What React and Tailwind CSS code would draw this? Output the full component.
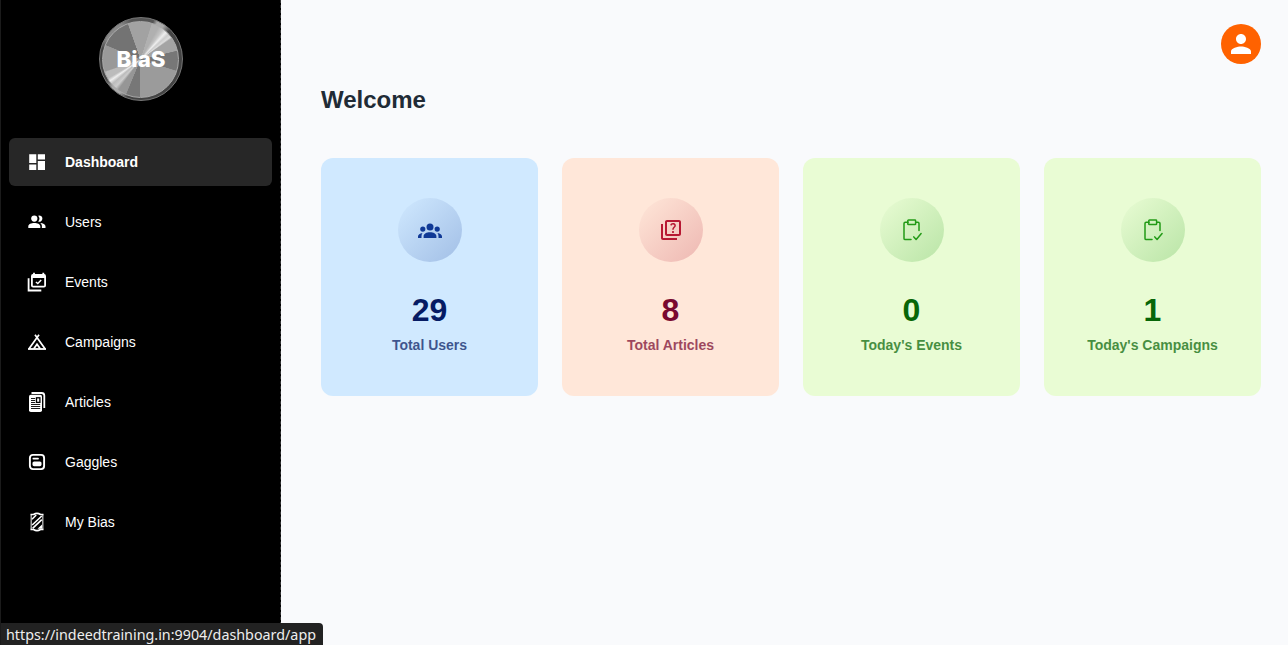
import { MdOutlineQuiz, MdPerson } from 'react-icons/md';

const DashboardIcon = () => (
  <svg width="22" height="22" viewBox="0 0 22 22" fill="currentColor">
    <path d="M3.2 3.2h7.1v8.8H3.2zM11.8 3.2H19v5.4h-7.2zM3.2 13.5h7.1V19H3.2zM11.8 10.1H19V19h-7.2z" />
  </svg>
);

const UsersIcon = () => (
  <svg width="22" height="22" viewBox="0 0 22 22" fill="currentColor">
    <circle cx="8.3" cy="7.6" r="3.1" />
    <path d="M12.2 4.7a3.1 3.1 0 1 1 0 5.8 4.4 4.4 0 0 0 0-5.8zM2.3 17v-1.8c0-2.1 3-3.3 6-3.3s6 1.2 6 3.3V17zM14.2 12c2.8.3 5.3 1.4 5.3 3.2V17h-3.6v-1.8c0-1.3-.6-2.4-1.7-3.2z" />
  </svg>
);

const GroupsIcon = () => (
  <svg width="24" height="24" viewBox="0 0 24 24" fill="currentColor">
    <circle cx="12" cy="8.9" r="3.5" />
    <circle cx="4.8" cy="11.1" r="2.6" />
    <circle cx="19.2" cy="11.1" r="2.6" />
    <path d="M5.6 20v-1.8c0-2.5 3-4 6.4-4s6.4 1.5 6.4 4V20zM0 20v-1.4c0-1.9 1.8-3.2 4.5-3.5-.7.8-1 1.9-1 3.1V20zM24 20v-1.4c0-1.9-1.8-3.2-4.5-3.5.7.8 1 1.9 1 3.1V20z" />
  </svg>
);

const EventsIcon = () => (
  <svg width="22" height="22" viewBox="0 0 22 22" fill="none" stroke="currentColor" strokeWidth="1.8">
    <path d="M2.6 7.3v12.2h12.7" />
    <rect x="5.9" y="4" width="13.2" height="11.6" rx="1.2" />
    <path d="M5.9 5.3h13.2" strokeWidth="3.4" />
    <path d="M8 1.8v3M17.3 1.8v3" />
    <path d="m9.9 10.9 1.9 1.7 3.4-3.5" strokeWidth="1.4" />
  </svg>
);

const CampIcon = () => (
  <svg width="22" height="22" viewBox="0 0 22 22" fill="none" stroke="currentColor" strokeWidth="1.7">
    <path d="M9 3.7 19 17.8M13 3.7 3 17.8" />
    <path d="M2 18h18" strokeWidth="1.8" />
    <path d="m7.8 17.8 3.2-4.6 3.2 4.6" />
  </svg>
);

const ArticlesIcon = () => (
  <svg width="22" height="22" viewBox="0 0 22 22" fill="none">
    <path d="M5.5 2H15.5Q18.3 2 18.3 4.5V17" stroke="currentColor" strokeWidth="1.8" />
    <rect x="3" y="3.8" width="13" height="17.2" rx="1.8" fill="currentColor" />
    <path d="M5 7.5h4.2M5 9.5h4.2M5 11.5h4.2M5 13.5h9.2M5 15.5h9.2M5 17.5h9.2" stroke="#000" strokeWidth=".9" />
    <rect x="10.5" y="6.8" width="3.4" height="4.6" stroke="#000" strokeWidth="1.3" />
  </svg>
);

const GagglesIcon = () => (
  <svg width="22" height="22" viewBox="0 0 22 22" fill="none">
    <rect x="3.9" y="3.9" width="14.2" height="14.2" rx="3" stroke="currentColor" strokeWidth="1.9" />
    <path d="M7.4 7.6h4.6" stroke="currentColor" strokeWidth="1.8" strokeLinecap="round" />
    <rect x="6.5" y="10.4" width="9" height="4.8" rx="1.6" fill="currentColor" />
  </svg>
);

const BiasIcon = () => (
  <svg width="22" height="22" viewBox="0 0 22 22" fill="none" stroke="currentColor">
    <path d="M5.2 3.8v14.4M16.8 3.8v14.4" strokeWidth="1.3" opacity=".75" />
    <path d="M4.5 3.5H7.5Q11 1.2 14.5 3.5H17.5M4.5 18.5H7.5Q11 20.8 14.5 18.5H17.5" strokeWidth="1.6" />
    <path d="M6 8.2 10.2 4M6.2 14 15.8 5M6.6 17.4 15.8 8.6" strokeWidth="1.6" />
    <path d="M11.5 17.8 16 13.6v4.2z" fill="currentColor" stroke="none" />
  </svg>
);

const ClipboardIcon = () => (
  <svg width="24" height="24" viewBox="0 0 24 24" fill="none" stroke="currentColor" strokeWidth="1.5" strokeLinecap="round" strokeLinejoin="round">
    <path d="M8 4.2H5.2Q4 4.2 4 5.4V20.4Q4 21.6 5.2 21.6H11M16 4.2H17.8Q19 4.2 19 5.4V12.5" />
    <rect x="7.8" y="2" width="7.8" height="4.6" rx=".7" />
    <path d="m13.8 18.9 2.3 2.5 5-5.8" />
  </svg>
);

const nav = [
  ['Dashboard', <DashboardIcon />],
  ['Users', <UsersIcon />],
  ['Events', <EventsIcon />],
  ['Campaigns', <CampIcon />],
  ['Articles', <ArticlesIcon />],
  ['Gaggles', <GagglesIcon />],
  ['My Bias', <BiasIcon />],
];

const cards = [
  { value: 29, label: 'Total Users', icon: <GroupsIcon />, card: 'bg-[#d0e9ff] text-[#061b64]', circle: 'text-[#103996] from-[#103996]/0 to-[#103996]/24' },
  { value: 8, label: 'Total Articles', icon: <MdOutlineQuiz size={24} />, card: 'bg-[#ffe7d9] text-[#7a0930]', circle: 'text-[#b71833] from-[#b72136]/0 to-[#b72136]/24' },
  { value: 0, label: "Today's Events", icon: <ClipboardIcon />, card: 'bg-[#e9fcd4] text-[#076608]', circle: 'text-[#229a16] from-[#229a16]/0 to-[#229a16]/24' },
  { value: 1, label: "Today's Campaigns", icon: <ClipboardIcon />, card: 'bg-[#e9fcd4] text-[#076608]', circle: 'text-[#229a16] from-[#229a16]/0 to-[#229a16]/24' },
];

function Logo() {
  return (
    <div className="flex size-[84px] items-center justify-center rounded-full border border-[#777] bg-[conic-gradient(#555_0_18deg,#aaa_24deg_34deg,#444_45deg_200deg,#aaa_212deg_225deg,#444_240deg_285deg,#888_300deg_330deg,#555_345deg)]">
      <div className="flex size-[77px] items-center justify-center rounded-full border border-[#aaa] bg-[conic-gradient(#a2a2a2_0_17deg,#b0b0b0_18deg_29deg,#c5c5c5_37deg,#eee_43deg,#ccc_48deg,#ddd_53deg,#a4a4a4_56deg_76deg,#777_77deg_107deg,#9b9b9b_108deg_180deg,#777_181deg_202deg,#969696_203deg_216deg,#ccc_222deg,#bbb_229deg,#eee_235deg,#bbb_240deg_250deg,#999_252deg_292deg,#737373_293deg_340deg,#a2a2a2_341deg)]">
        <svg width="54" height="26" viewBox="0 0 54 26" className="shrink-0">
          <text x="27" y="20.5" textAnchor="middle" textLength="49" lengthAdjust="spacingAndGlyphs" fill="#fff" className="font-['Inter',sans-serif] text-[22px] font-extrabold">BiaS</text>
        </svg>
      </div>
    </div>
  );
}

export default function App() {
  return (
    <div className="flex h-[645px] w-full overflow-hidden bg-[#f9fafc] font-['Liberation_Sans',sans-serif]">
      <aside className="flex w-[281px] shrink-0 flex-col border-x border-dashed border-r-[#333] border-l-[#1b1b1b] bg-black [border-left-style:solid]">
        <div className="flex h-[138px] justify-center pt-[17px]">
          <Logo />
        </div>
        <nav className="flex flex-col gap-3 px-2">
          {nav.map(([label, icon], i) => (
            <a key={label} className={`flex h-12 items-center rounded-md text-sm text-white ${i === 0 ? 'bg-[#272727] font-bold' : ''}`}>
              <span className="flex w-14 items-center justify-center">{icon}</span>
              {label}
            </a>
          ))}
        </nav>
      </aside>
      <main className="flex-1 pr-[27px] pl-10">
        <header className="flex h-[64px] items-end justify-end">
          <div className="flex size-10 items-center justify-center rounded-full bg-[#ff6200] text-white">
            <MdPerson size={30} />
          </div>
        </header>
        <h1 className="mt-[18px] text-2xl leading-9 font-bold text-[#212b36]">Welcome</h1>
        <section className="mt-10 grid grid-cols-4 gap-6">
          {cards.map((c) => (
            <article key={c.label} className={`flex h-[238px] flex-col items-center rounded-xl pt-10 ${c.card}`}>
              <div className={`flex size-16 items-center justify-center rounded-full bg-linear-135 ${c.circle}`}>{c.icon}</div>
              <div className="mt-6 text-[32px] leading-12 font-bold">{c.value}</div>
              <div className="text-sm leading-[22px] font-bold opacity-72">{c.label}</div>
            </article>
          ))}
        </section>
      </main>
      <div className="absolute top-[623px] left-px flex h-[22px] w-[322px] items-center rounded-tr bg-[#222] pl-[5px] text-[#eee]">
        <svg width="314" height="22" viewBox="0 0 314 22" overflow="visible">
          <text x="0" y="17" textLength="310" lengthAdjust="spacingAndGlyphs" fill="currentColor" className="font-['Noto_Sans',sans-serif] text-[15px]">https://indeedtraining.in:9904/dashboard/app</text>
        </svg>
      </div>
    </div>
  );
}
